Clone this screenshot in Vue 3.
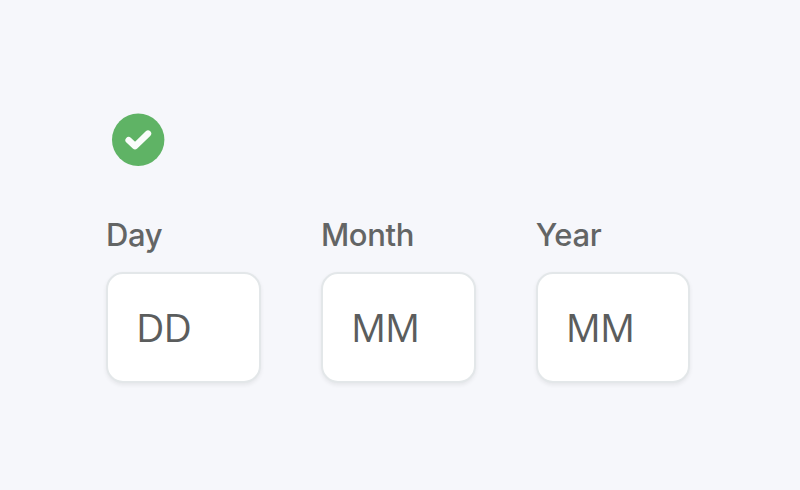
<template>
  <main class="date-page">
    <svg class="status-icon" viewBox="0 0 54 54" role="img" aria-label="Valid">
      <circle cx="27.2" cy="26.7" r="26.2" fill="#5fb365" />
      <path d="M17.6 27.2L24 33.2L37 20.6" fill="none" stroke="#fafdfb" stroke-width="6.4" stroke-linecap="round" stroke-linejoin="round" />
    </svg>
    <div class="date-fields">
      <label v-for="field in fields" :key="field.label" class="field">
        <span class="field-label">{{ field.label }}</span>
        <input v-model="field.value" class="field-input" type="text" inputmode="numeric" :placeholder="field.placeholder" />
      </label>
    </div>
  </main>
</template>

<script setup>
import { reactive } from 'vue'

const fields = reactive([
  { label: 'Day', placeholder: 'DD', value: '' },
  { label: 'Month', placeholder: 'MM', value: '' },
  { label: 'Year', placeholder: 'MM', value: '' }
])
</script>

<style>
body {
  margin: 0;
  background: #f6f7fb;
}
</style>

<style scoped>
.date-page {
  box-sizing: border-box;
  height: 490px;
  padding: 113px 106px 0;
  background: #f6f7fb;
  font-family: Inter, "Liberation Sans", sans-serif;
}

.status-icon {
  display: block;
  width: 54px;
  height: 54px;
  margin-left: 5px;
}

.date-fields {
  display: flex;
  gap: 60.2px;
  margin-top: 48px;
}

.field {
  display: flex;
  flex-direction: column;
  width: 154.7px;
}

.field-label {
  height: 40px;
  margin-bottom: 17px;
  color: #636565;
  font-size: 31px;
  font-weight: 500;
  letter-spacing: -0.35px;
  line-height: 40px;
}

.field-input {
  box-sizing: border-box;
  width: 100%;
  height: 111px;
  padding: 0 28px 2px;
  background: #fff;
  border: 2px solid #e3e7e9;
  border-radius: 17px;
  box-shadow: 0 2px 4px rgba(0, 0, 0, 0.07);
  outline: none;
  color: #5b5d5d;
  font-family: "Open Sans", "Noto Sans", sans-serif;
  font-size: 39px;
  font-weight: 400;
  letter-spacing: -0.9px;
}

.field-input::placeholder {
  color: #5b5d5d;
  opacity: 1;
}
</style>
